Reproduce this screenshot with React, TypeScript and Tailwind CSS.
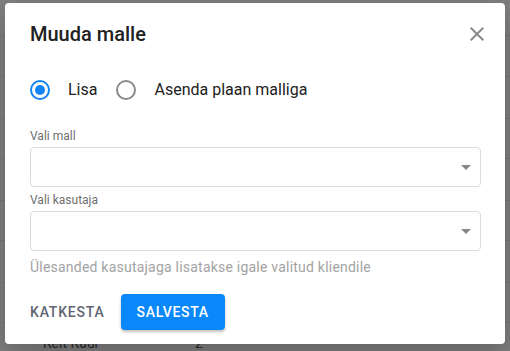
import React, { useState } from 'react';

const rowHeights = [36, 41, 42, 40, 42, 40, 42, 40];

function App() {
  const [mode, setMode] = useState<'add' | 'replace'>('add');

  return (
    <div className="relative h-[351px] w-[510px] overflow-hidden bg-[#808080] font-['Roboto',sans-serif]">
      {/* dimmed table behind the dialog */}
      <div className="flex flex-col">
        {rowHeights.map((h, i) => (
          <div key={i} className="border-b border-[#777777]" style={{ height: h }} />
        ))}
        <div className="flex h-[41px] items-center text-[14px] text-[#2b2b2b]">
          <span className="ml-[43px] w-[152px]">Keit Kaur</span>
          <span>2</span>
        </div>
      </div>

      {/* dialog */}
      <div className="absolute left-[5px] top-[3px] flex h-[341px] w-[500px] flex-col rounded bg-white px-[25px] pt-[17px] shadow-[0_10px_30px_rgba(0,0,0,0.25)]">
        <div className="flex items-center justify-between">
          <h2 className="text-[20px] font-medium leading-[28px] text-[#212121]">Muuda malle</h2>
          <button className="mr-[-9px] text-[#8a8a8a]" aria-label="Sulge">
            <svg width="24" height="24" viewBox="0 0 24 24" fill="currentColor">
              <path d="M19 6.41 17.59 5 12 10.59 6.41 5 5 6.41 10.59 12 5 17.59 6.41 19 12 13.41 17.59 19 19 17.59 13.41 12z" />
            </svg>
          </button>
        </div>

        <div className="mt-[24px] flex h-[36px] items-center text-[16px] text-[#212121]">
          <label className="flex cursor-pointer items-center" onClick={() => setMode('add')}>
            <Radio checked={mode === 'add'} />
            <span className="ml-[18px]">Lisa</span>
          </label>
          <label className="ml-[19px] flex cursor-pointer items-center" onClick={() => setMode('replace')}>
            <Radio checked={mode === 'replace'} />
            <span className="ml-[18px]">Asenda plaan malliga</span>
          </label>
        </div>

        <div className="mt-[20px] text-[12px] leading-[16px] text-[#6f6f6f]">Vali mall</div>
        <Select />

        <div className="mt-[5px] text-[12px] leading-[16px] text-[#6f6f6f]">Vali kasutaja</div>
        <Select />

        <p className="mt-[6px] text-[14px] leading-[20px] tracking-[0.22px] text-[#a3a3a3]">
          Ülesanded kasutajaga lisatakse igale valitud kliendile
        </p>

        <div className="mt-[17px] flex items-center gap-[16px]">
          <button className="text-[14px] font-medium uppercase tracking-[0.8px] text-[#5f6672]">Katkesta</button>
          <button className="h-[36px] rounded bg-[#0a88fa] px-[16px] text-[14px] font-medium uppercase tracking-[0.7px] text-white shadow-[0_2px_3px_rgba(0,0,0,0.25)]">
            Salvesta
          </button>
        </div>
      </div>
    </div>
  );
}

function Radio({ checked }: { checked: boolean }) {
  return (
    <span
      className={`flex h-[20px] w-[20px] items-center justify-center rounded-full border-2 ${
        checked ? 'border-[#1384f4]' : 'border-[#8a8a8a]'
      }`}
    >
      {checked && <span className="h-[10px] w-[10px] rounded-full bg-[#1384f4]" />}
    </span>
  );
}

function Select() {
  return (
    <div className="mt-[3px] flex h-[40px] w-[451px] items-center justify-end rounded border border-[#dcdcdc] pr-[2px]">
      <svg width="24" height="24" viewBox="0 0 24 24" fill="#888888">
        <path d="M7 10l5 5 5-5z" />
      </svg>
    </div>
  );
}

export default App;
